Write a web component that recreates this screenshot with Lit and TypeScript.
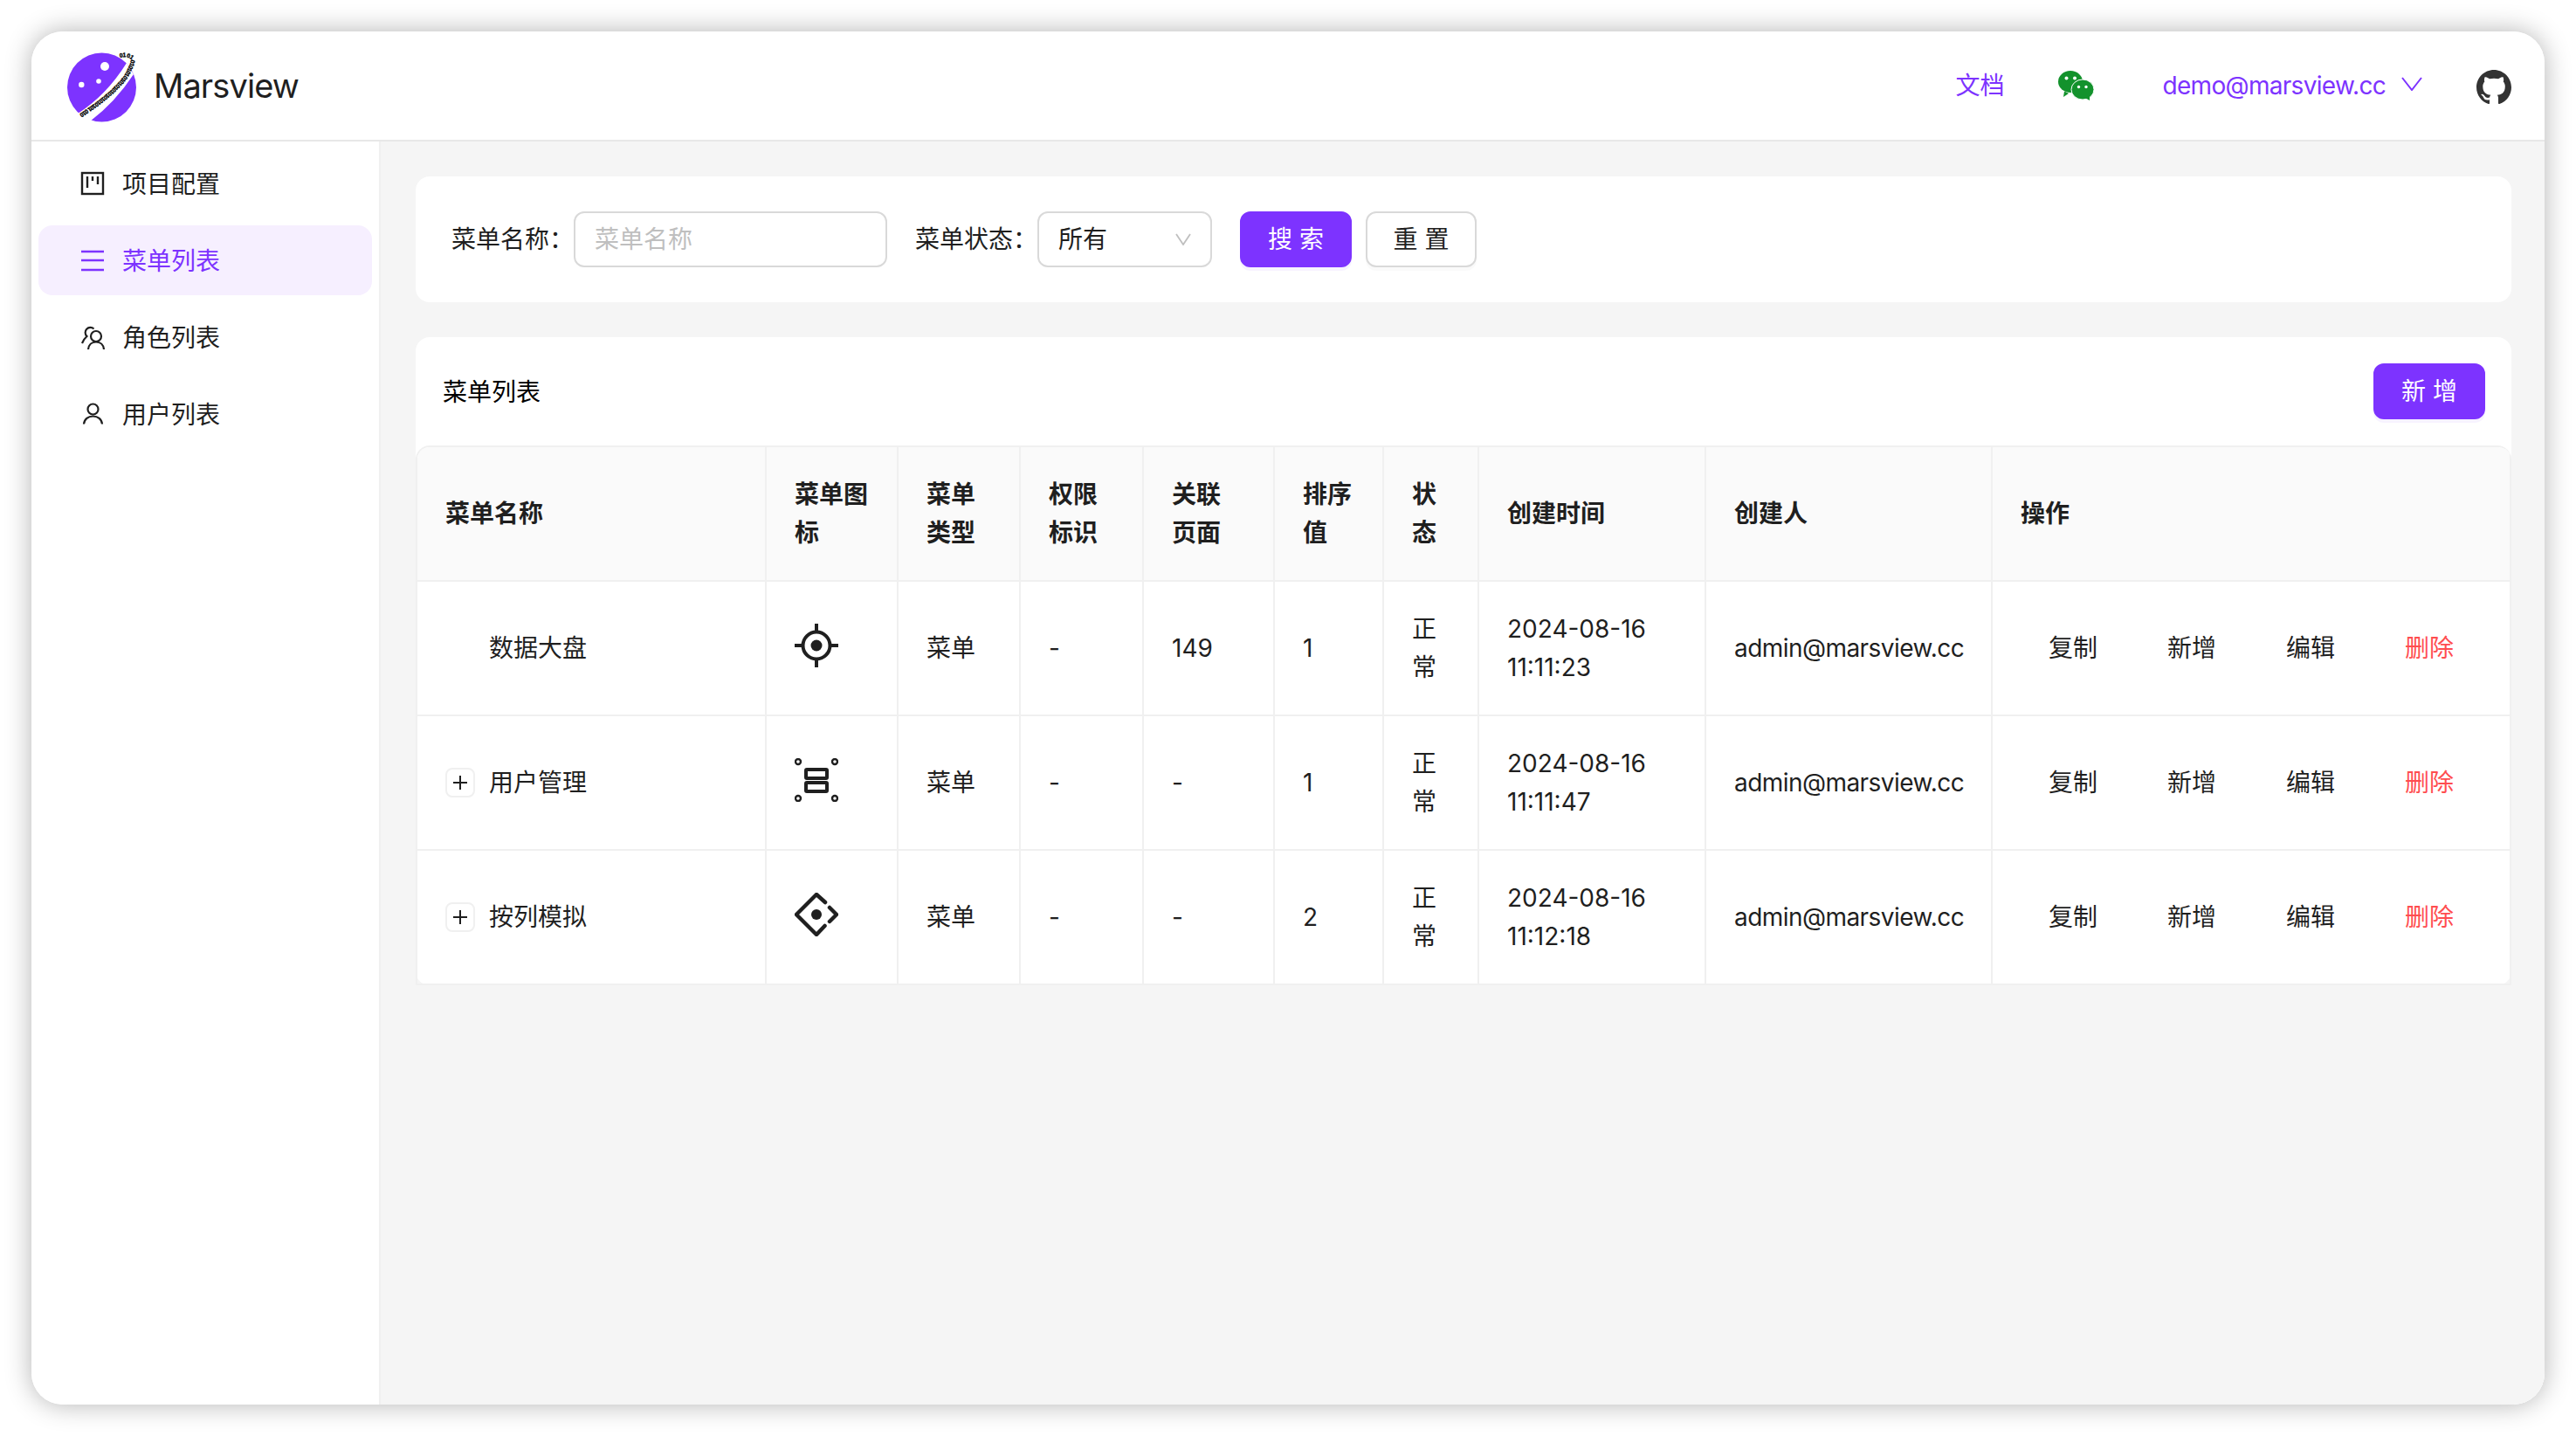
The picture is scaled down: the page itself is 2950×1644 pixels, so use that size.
import { LitElement, html, css, svg } from "lit";
import { customElement } from "lit/decorators.js";

const navItems = [
  { text: "项目配置", icon: "project" },
  { text: "菜单列表", icon: "menu", active: true },
  { text: "角色列表", icon: "role" },
  { text: "用户列表", icon: "user" },
];

const rows = [
  { name: "数据大盘", icon: "aim", parent: false, page: "149", sort: "1", time: "2024-08-16 11:11:23" },
  { name: "用户管理", icon: "group", parent: true, page: "-", sort: "1", time: "2024-08-16 11:11:47" },
  { name: "按列模拟", icon: "diamond", parent: true, page: "-", sort: "2", time: "2024-08-16 11:12:18" },
];

const columns = [
  { title: "菜单名称", width: 400 },
  { title: "菜单图标", width: 151 },
  { title: "菜单类型", width: 140 },
  { title: "权限标识", width: 141 },
  { title: "关联页面", width: 150 },
  { title: "排序值", width: 125 },
  { title: "状态", width: 109 },
  { title: "创建时间", width: 260 },
  { title: "创建人", width: 328 },
  { title: "操作", width: 594 },
];

function navIcon(name: string) {
  switch (name) {
    case "project":
      return svg`<rect x="2" y="2" width="24" height="24" fill="none" stroke="currentColor" stroke-width="2.4"/>
        <path d="M8 6v13M14 6v5M20 6v9" fill="none" stroke="currentColor" stroke-width="2.4"/>`;
    case "menu":
      return svg`<path d="M1 4h26M1 14h26M1 25h26" fill="none" stroke="currentColor" stroke-width="2.4"/>`;
    case "role":
      return svg`<circle cx="18" cy="13" r="6" fill="none" stroke="currentColor" stroke-width="2.2"/>
        <path d="M2 21Q4 16 7.5 13A5.8 5.8 0 0 1 15.5 4.5M9 28C9.5 23 13 19.5 18 19.5S26.5 23 27 28" fill="none" stroke="currentColor" stroke-width="2.2"/>`;
    default:
      return svg`<circle cx="14.5" cy="8.5" r="6" fill="none" stroke="currentColor" stroke-width="2.2"/>
        <path d="M4 25.5C4.5 20 9 16.5 14.5 16.5S24.5 20 25 25.5" fill="none" stroke="currentColor" stroke-width="2.2"/>`;
  }
}

function rowIcon(name: string) {
  switch (name) {
    case "aim":
      return svg`<circle cx="25" cy="25" r="15.5" fill="none" stroke="currentColor" stroke-width="4"/>
        <circle cx="25" cy="25" r="6.5" fill="currentColor"/>
        <path d="M25 0v10M25 40v10M0 25h10M40 25h10" fill="none" stroke="currentColor" stroke-width="4"/>`;
    case "group":
      return svg`<g fill="none" stroke="currentColor" stroke-width="2.4">
          <circle cx="4" cy="4" r="3"/><circle cx="46" cy="4" r="3"/>
          <circle cx="4" cy="46" r="3"/><circle cx="46" cy="46" r="3"/>
        </g>
        <rect x="13" y="13" width="24" height="10" rx="1" fill="none" stroke="currentColor" stroke-width="4"/>
        <rect x="13" y="28" width="24" height="10" rx="1" fill="none" stroke="currentColor" stroke-width="4"/>`;
    default:
      return svg`<path d="M35 11 25 2 2 25l23 23 9.5-10M40 17l8 8-8 8" fill="none" stroke="currentColor" stroke-width="4.5" stroke-linejoin="round" stroke-linecap="round"/>
        <circle cx="25" cy="25" r="6" fill="currentColor"/>`;
  }
}

@customElement("app-root")
export class AppRoot extends LitElement {
  static styles = css`
    :host {
      display: block;
      box-sizing: border-box;
      height: 100vh;
      padding: 36px;
      background: #fff;
      font-family: Inter, "Noto Sans CJK SC", sans-serif;
      font-size: 28px;
      line-height: 44px;
      color: #1f1f1f;
    }
    .window-wrap {
      height: 100%;
      border-radius: 36px;
      box-shadow: 0 0 30px rgba(0, 0, 0, 0.3);
    }
    .window {
      height: 100%;
      display: flex;
      flex-direction: column;
      border-radius: 36px;
      overflow: hidden;
      background: #fff;
    }

    header {
      flex: none;
      height: 124px;
      display: flex;
      align-items: center;
      border-bottom: 2px solid #e8e8e8;
    }
    .logo {
      display: block;
      width: 110px;
      height: 110px;
      margin-left: 24px;
    }
    .brand {
      margin-left: 6px;
      font-size: 38px;
      letter-spacing: -0.9px;
    }
    .spacer {
      flex: 1;
    }
    .link {
      color: #7d33ff;
    }
    .email {
      letter-spacing: -0.7px;
    }
    .docs {
      margin-right: 60px;
    }
    .wechat {
      display: block;
      width: 42px;
      height: 34px;
      margin-right: 79px;
    }
    .chevron {
      display: block;
      width: 24px;
      height: 16px;
      margin: 0 0 4px 18px;
      color: #7d33ff;
    }
    .github {
      display: block;
      width: 40px;
      height: 40px;
      margin: 4px 38px 0 62px;
      color: #333;
    }

    .body {
      flex: 1;
      min-height: 0;
      display: flex;
    }
    aside {
      flex: none;
      box-sizing: border-box;
      width: 400px;
      padding: 8px;
      border-right: 2px solid #f0f0f0;
      display: flex;
      flex-direction: column;
      gap: 8px;
    }
    .nav-item {
      height: 80px;
      padding-left: 48px;
      display: flex;
      align-items: center;
      gap: 20px;
      border-radius: 16px;
    }
    .nav-item svg {
      display: block;
      width: 28px;
      height: 28px;
    }
    .nav-item span {
      padding-top: 2px;
    }
    .nav-item.active {
      background: #f6efff;
      color: #7d33ff;
    }

    main {
      flex: 1;
      min-width: 0;
      padding: 40px 38px 40px 40px;
      background: #f5f5f5;
    }
    .card {
      background: #fff;
      border-radius: 16px;
    }
    .search {
      padding: 40px 40px 40px 41px;
      display: flex;
      align-items: center;
      margin-bottom: 40px;
    }
    .label {
      flex: none;
      width: 140px;
      line-height: 64px;
      white-space: nowrap;
    }
    .input,
    .select {
      box-sizing: border-box;
      height: 64px;
      display: flex;
      align-items: center;
      padding: 0 22px;
      border: 2px solid #d9d9d9;
      border-radius: 12px;
      margin-right: 32px;
    }
    .input {
      width: 359px;
      color: #bfbfbf;
    }
    .select {
      width: 200px;
      justify-content: space-between;
    }
    .select svg {
      display: block;
      width: 18px;
      height: 14px;
      color: #bfbfbf;
    }
    .btn {
      box-sizing: border-box;
      height: 64px;
      display: flex;
      align-items: center;
      justify-content: center;
      border-radius: 12px;
      border: 2px solid #d9d9d9;
      background: #fff;
      box-shadow: 0 4px 0 rgba(0, 0, 0, 0.02);
      white-space: pre;
    }
    .btn.primary {
      border-color: #7d33ff;
      background: #7d33ff;
      color: #fff;
      box-shadow: 0 4px 0 rgba(125, 51, 255, 0.06);
    }
    .btn.search-btn {
      width: 128px;
      margin-right: 16px;
    }
    .btn.reset-btn {
      width: 127px;
    }

    .toolbar {
      height: 124px;
      padding: 0 30px 0 31px;
      display: flex;
      align-items: center;
      justify-content: space-between;
      color: #000;
    }
    .toolbar .title {
      padding-top: 2px;
    }
    .toolbar .btn {
      width: 128px;
    }

    .table-wrap {
      border-top: 2px solid #f0f0f0;
      border-left: 2px solid #f0f0f0;
      border-radius: 16px 16px 0 0;
      overflow: hidden;
    }
    table {
      width: 2398px;
      table-layout: fixed;
      border-collapse: separate;
      border-spacing: 0;
    }
    th,
    td {
      box-sizing: border-box;
      padding: 32px;
      height: 154px;
      border-right: 2px solid #f0f0f0;
      border-bottom: 2px solid #f0f0f0;
      text-align: left;
      font-weight: 400;
    }
    th {
      background: #fafafa;
      font-weight: 600;
    }
    /* keeps the header on two even lines, 关联 / 页面 */
    th:nth-child(5) {
      padding-right: 36px;
    }
    .name-cell {
      display: flex;
      align-items: center;
      gap: 16px;
    }
    .expand {
      flex: none;
      box-sizing: border-box;
      width: 34px;
      height: 34px;
      border: 2px solid #f0f0f0;
      border-radius: 8px;
      display: flex;
      align-items: center;
      justify-content: center;
    }
    .expand.hidden {
      visibility: hidden;
    }
    .expand svg {
      display: block;
      width: 18px;
      height: 18px;
    }
    .row-icon {
      display: block;
      width: 50px;
      height: 50px;
      margin-bottom: 6px;
    }
    .creator {
      letter-spacing: -0.55px;
      white-space: nowrap;
    }
    .actions {
      display: flex;
      gap: 80px;
      padding-left: 32px;
    }
    .actions .danger {
      color: #ff4d4f;
    }
  `;

  render() {
    return html`
      <div class="window-wrap">
        <div class="window">
          <header>
            <svg class="logo" viewBox="0 0 110 110">
              <circle cx="56.5" cy="57" r="39.5" fill="#7d33ff"/>
              <circle cx="60" cy="33" r="5" fill="#fff"/>
              <circle cx="33.3" cy="54" r="3.2" fill="#fff"/>
              <circle cx="53" cy="50" r="2.8" fill="#fff"/>
              <path d="M29 87 Q62 66 85 29 L93 42 Q72 74 43 96 Z" fill="#fff"/>
              <defs>
                <path id="orbit" d="M77 23 Q86 21 90 25 Q90 30 82 44 Q66 65 30 88 Q22 92 20 88 Q20 83 24 79"/>
              </defs>
              <text font-family="Liberation Sans, sans-serif" font-size="6.8" font-weight="700" letter-spacing="-0.6" fill="#000" stroke="#000" stroke-width="0.35">
                <textPath href="#orbit">01 01010101010101010101010101 010</textPath>
              </text>
            </svg>
            <span class="brand">Marsview</span>
            <span class="spacer"></span>
            <span class="link docs">文档</span>
            <svg class="wechat" viewBox="0 0 42 34">
              <path d="M8 23.5 7 30l6-4z" fill="#13922c"/>
              <ellipse cx="15" cy="12.5" rx="14" ry="12.5" fill="#13922c"/>
              <circle cx="10.5" cy="8.5" r="2" fill="#fff"/>
              <circle cx="20" cy="8.5" r="2" fill="#fff"/>
              <ellipse cx="29" cy="21.5" rx="13" ry="11.5" fill="#13922c" stroke="#fff" stroke-width="1"/>
              <path d="m32 31 5 3v-5z" fill="#13922c"/>
              <circle cx="24.5" cy="18.5" r="1.7" fill="#fff"/>
              <circle cx="33" cy="18.5" r="1.7" fill="#fff"/>
            </svg>
            <span class="link email">demo@marsview.cc</span>
            <svg class="chevron" viewBox="0 0 24 16">
              <path d="m1 1 11 14L23 1" fill="none" stroke="currentColor" stroke-width="2"/>
            </svg>
            <svg class="github" viewBox="0 0 16 16">
              <path fill="currentColor" d="M8 0C3.58 0 0 3.58 0 8c0 3.54 2.29 6.53 5.47 7.59.4.07.55-.17.55-.38 0-.19-.01-.82-.01-1.49-2.01.37-2.53-.49-2.69-.94-.09-.23-.48-.94-.82-1.13-.28-.15-.68-.52-.01-.53.63-.01 1.08.58 1.23.82.72 1.21 1.87.87 2.33.66.07-.52.28-.87.51-1.07-1.78-.2-3.64-.89-3.64-3.95 0-.87.31-1.59.82-2.15-.08-.2-.36-1.02.08-2.12 0 0 .67-.21 2.2.82.64-.18 1.32-.27 2-.27.68 0 1.36.09 2 .27 1.53-1.04 2.2-.82 2.2-.82.44 1.1.16 1.92.08 2.12.51.56.82 1.27.82 2.15 0 3.07-1.87 3.75-3.65 3.95.29.25.54.73.54 1.48 0 1.07-.01 1.93-.01 2.2 0 .21.15.46.55.38A8.013 8.013 0 0016 8c0-4.42-3.58-8-8-8z"/>
            </svg>
          </header>
          <div class="body">
            <aside>
              ${navItems.map(
                (item) => html`
                  <div class="nav-item ${item.active ? "active" : ""}">
                    <svg viewBox="0 0 28 28">${navIcon(item.icon)}</svg>
                    <span>${item.text}</span>
                  </div>
                `
              )}
            </aside>
            <main>
              <div class="card search">
                <span class="label">菜单名称：</span>
                <div class="input">菜单名称</div>
                <span class="label">菜单状态：</span>
                <div class="select">
                  <span>所有</span>
                  <svg viewBox="0 0 18 14"><path d="m1 1 8 12 8-12" fill="none" stroke="currentColor" stroke-width="1.8"/></svg>
                </div>
                <div class="btn primary search-btn">搜 索</div>
                <div class="btn reset-btn">重 置</div>
              </div>
              <div class="card">
                <div class="toolbar">
                  <span class="title">菜单列表</span>
                  <div class="btn primary">新 增</div>
                </div>
                <div class="table-wrap">
                  <table>
                    <colgroup>
                      ${columns.map((c) => html`<col style="width:${c.width}px" />`)}
                    </colgroup>
                    <thead>
                      <tr>${columns.map((c) => html`<th>${c.title}</th>`)}</tr>
                    </thead>
                    <tbody>
                      ${rows.map(
                        (r) => html`
                          <tr>
                            <td>
                              <div class="name-cell">
                                <span class="expand ${r.parent ? "" : "hidden"}">
                                  <svg viewBox="0 0 18 18"><path d="M9 1v16M1 9h16" stroke="#1f1f1f" stroke-width="2"/></svg>
                                </span>
                                <span>${r.name}</span>
                              </div>
                            </td>
                            <td><svg class="row-icon" viewBox="0 0 50 50">${rowIcon(r.icon)}</svg></td>
                            <td>菜单</td>
                            <td>-</td>
                            <td>${r.page}</td>
                            <td>${r.sort}</td>
                            <td>正常</td>
                            <td>${r.time}</td>
                            <td class="creator">admin@marsview.cc</td>
                            <td>
                              <div class="actions">
                                <span>复制</span><span>新增</span><span>编辑</span><span class="danger">删除</span>
                              </div>
                            </td>
                          </tr>
                        `
                      )}
                    </tbody>
                  </table>
                </div>
              </div>
            </main>
          </div>
        </div>
      </div>
    `;
  }
}
